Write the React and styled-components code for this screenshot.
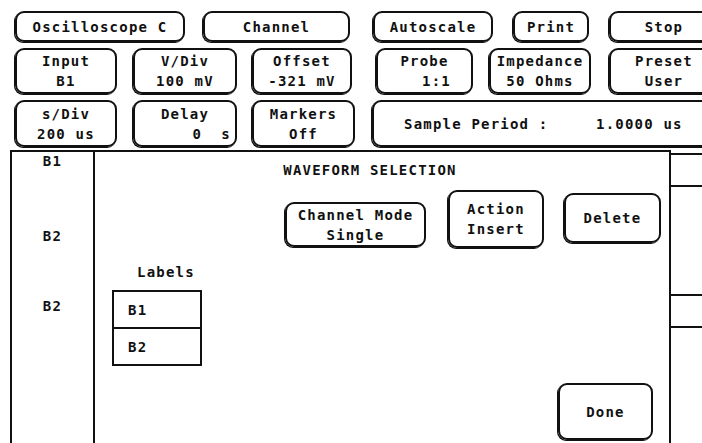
import React from "react";
import styled, { createGlobalStyle } from "styled-components";

const Global = createGlobalStyle`
	html, body {
		margin: 0;
		padding: 0;
		background: #fff;
		overflow: hidden;
	}
	body {
		width: 702px;
		height: 443px;
		font-family: "DejaVu Sans Mono", "Liberation Mono", monospace;
		font-weight: bold;
		font-size: 14px;
		letter-spacing: 1.2px;
		color: #111;
	}
`;

const Screen = styled.div`
	width: 702px;
	height: 443px;
	overflow: hidden;
	display: flex;
	flex-direction: column;
`;

const Controls = styled.div`
	display: flex;
	flex-direction: column;
	gap: 6px;
	padding: 11px 0 0 15px;
`;

const Row = styled.div`
	display: flex;
	height: ${(p) => p.$h}px;
`;

const Key = styled.div`
	flex: 0 0 auto;
	box-sizing: border-box;
	width: ${(p) => p.$w}px;
	margin-left: ${(p) => p.$ml || 0}px;
	height: 100%;
	border: 2px solid #111;
	border-radius: 9px;
	box-shadow: -1px 1px 0 #111;
	display: flex;
	flex-direction: column;
	align-items: center;
	justify-content: center;
	gap: 6px;
	line-height: 14px;
	white-space: pre;
`;

const Value = styled.span`
	align-self: ${(p) => (p.$right ? "flex-end" : "center")};
	padding-left: ${(p) => p.$shift || 0}px;
	padding-right: ${(p) => (p.$right ? 4 : 0)}px;
`;

const PeriodBox = styled(Key)`
	flex-direction: row;
	justify-content: flex-start;
	padding-left: 30px;
	gap: 0;
`;

const PeriodLabel = styled.span`
	width: 192px;
`;

const Main = styled.div`
	display: flex;
	margin-top: 3px;
	height: 293px;
`;

const Traces = styled.div`
	margin-left: 10px;
	width: 81px;
	border-left: 2px solid #111;
	border-top: 2px solid #111;
	display: flex;
	flex-direction: column;
	align-items: center;
	line-height: 14px;
`;

const TraceName = styled.span`
	margin-top: ${(p) => p.$mt}px;
`;

const Dialog = styled.div`
	box-sizing: border-box;
	width: 578px;
	border: 2px solid #111;
	border-bottom: none;
	display: flex;
	flex-direction: column;
	padding: 11px 0 3px 0;
	line-height: 14px;
`;

const Title = styled.div`
	text-align: center;
	padding-right: 24px;
`;

const Choices = styled.div`
	display: flex;
	align-items: flex-start;
	margin-top: 13px;
	padding-left: 190px;
`;

const Choice = styled(Key)`
	height: ${(p) => p.$h}px;
	margin-top: ${(p) => p.$mt || 0}px;
`;

const LabelsBlock = styled.div`
	margin: 17px 0 0 17px;
	display: flex;
	flex-direction: column;
`;

const LabelsHead = styled.span`
	padding-left: 25px;
	margin-bottom: 11px;
`;

const LabelsTable = styled.div`
	width: 90px;
	border: 2px solid #111;
	box-sizing: border-box;
`;

const LabelCell = styled.div`
	height: 35px;
	display: flex;
	align-items: center;
	padding-left: 14px;
	& + & {
		border-top: 2px solid #111;
	}
`;

const DoneKey = styled(Key)`
	margin-top: auto;
	align-self: flex-end;
	margin-right: 16px;
	height: 57px;
`;

const Side = styled.div`
	flex: 1;
	padding-top: 3px;
	display: flex;
	flex-direction: column;
`;

const SideCell = styled.div`
	height: 30px;
	margin-top: ${(p) => p.$mt || 0}px;
	border-top: 2px solid #111;
	border-bottom: 2px solid #111;
`;

export default function App() {
	return (
		<Screen>
			<Global />
			<Controls>
				<Row $h={31}>
					<Key $w={170}>Oscilloscope C</Key>
					<Key $w={147} $ml={18}>Channel</Key>
					<Key $w={120} $ml={23}>Autoscale</Key>
					<Key $w={76} $ml={20}>Print</Key>
					<Key $w={110} $ml={20}>Stop</Key>
				</Row>
				<Row $h={46}>
					<Key $w={102}>
						<span>Input</span>
						<Value>B1</Value>
					</Key>
					<Key $w={104} $ml={16}>
						<span>V/Div</span>
						<Value>100 mV</Value>
					</Key>
					<Key $w={100} $ml={15}>
						<span>Offset</span>
						<Value>-321 mV</Value>
					</Key>
					<Key $w={97} $ml={24}>
						<span>Probe</span>
						<Value $shift={24}>1:1</Value>
					</Key>
					<Key $w={102} $ml={16}>
						<span>Impedance</span>
						<Value>50 Ohms</Value>
					</Key>
					<Key $w={110} $ml={18}>
						<span>Preset</span>
						<Value>User</Value>
					</Key>
				</Row>
				<Row $h={47}>
					<Key $w={102}>
						<span>s/Div</span>
						<Value>200 us</Value>
					</Key>
					<Key $w={104} $ml={16}>
						<span>Delay</span>
						<Value $right>0  s</Value>
					</Key>
					<Key $w={103} $ml={15}>
						<span>Markers</span>
						<Value>Off</Value>
					</Key>
					<PeriodBox $w={340} $ml={17}>
						<PeriodLabel>Sample Period :</PeriodLabel>
						<span>1.0000 us</span>
					</PeriodBox>
				</Row>
			</Controls>
			<Main>
				<Traces>
					<TraceName $mt={2}>B1</TraceName>
					<TraceName $mt={61}>B2</TraceName>
					<TraceName $mt={56}>B2</TraceName>
				</Traces>
				<Dialog>
					<Title>WAVEFORM SELECTION</Title>
					<Choices>
						<Choice $w={141} $h={45} $mt={12}>
							<span>Channel Mode</span>
							<span>Single</span>
						</Choice>
						<Choice $w={96} $h={58} $ml={22}>
							<span>Action</span>
							<span>Insert</span>
						</Choice>
						<Choice $w={97} $h={50} $ml={20} $mt={3}>
							Delete
						</Choice>
					</Choices>
					<LabelsBlock>
						<LabelsHead>Labels</LabelsHead>
						<LabelsTable>
							<LabelCell>B1</LabelCell>
							<LabelCell>B2</LabelCell>
						</LabelsTable>
					</LabelsBlock>
					<DoneKey $w={95}>Done</DoneKey>
				</Dialog>
				<Side>
					<SideCell />
					<SideCell $mt={107} />
				</Side>
			</Main>
		</Screen>
	);
}
